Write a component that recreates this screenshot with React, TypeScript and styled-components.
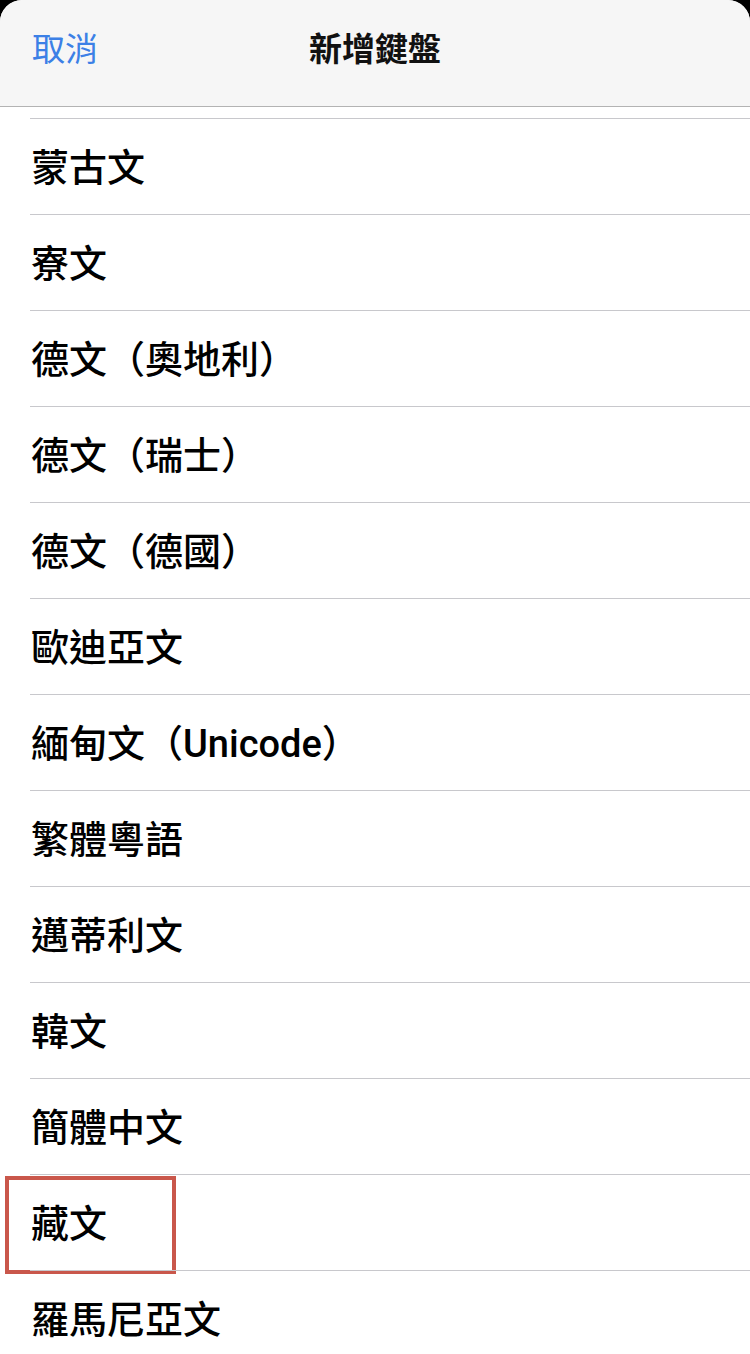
import React from "react";
import styled, { createGlobalStyle } from "styled-components";

const Global = createGlobalStyle`
  html, body { margin: 0; padding: 0; background: #000; }
  body { font-family: Roboto, "Noto Sans CJK TC", sans-serif; }
`;

const Page = styled.div`
  width: 750px;
  height: 1354px;
  overflow: hidden;
  background: #fff;
  border-radius: 22px 22px 0 0;
  display: flex;
  flex-direction: column;
`;

const Header = styled.header`
  height: 106px;
  flex: none;
  background: #f6f6f6;
  border-bottom: 1px solid #b3b3b3;
  display: grid;
  grid-template-columns: 1fr auto 1fr;
  align-items: center;
  padding: 0 32px;
  font-family: "Noto Sans CJK TC", sans-serif;
`;

const Cancel = styled.span`
  color: #3c80e6;
  font-size: 33px;
  font-weight: 400;
  justify-self: start;
  margin-top: -12px;
`;

const Title = styled.h1`
  margin: 0;
  margin-top: -12px;
  font-size: 33px;
  font-weight: 700;
  color: #111;
`;

const List = styled.div`
  display: flex;
  flex-direction: column;
`;

const Spacer = styled.div`
  height: 11px;
`;

const Row = styled.div`
  position: relative;
  margin-left: 30px;
  box-sizing: border-box;
  height: 96px;
  border-top: 1px solid #c8c8cc;
  display: flex;
  align-items: center;
  padding: 0 0 5px 1px;
  font-size: 38px;
  color: #000;
  font-weight: 500;
`;

const Highlight = styled.div`
  position: absolute;
  left: -25px;
  top: 1px;
  width: 163px;
  height: 90px;
  border: 4px solid #c9574b;
`;

const items = [
  "蒙古文",
  "寮文",
  "德文（奧地利）",
  "德文（瑞士）",
  "德文（德國）",
  "歐迪亞文",
  "緬甸文（Unicode）",
  "繁體粵語",
  "邁蒂利文",
  "韓文",
  "簡體中文",
  "藏文",
  "羅馬尼亞文",
];

export default function App() {
  return (
    <>
      <Global />
      <Page>
        <Header>
          <Cancel>取消</Cancel>
          <Title>新增鍵盤</Title>
          <span />
        </Header>
        <List>
          <Spacer />
          {items.map((t) => (
            <Row key={t}>
              {t}
              {t === "藏文" && <Highlight />}
            </Row>
          ))}
        </List>
      </Page>
    </>
  );
}
